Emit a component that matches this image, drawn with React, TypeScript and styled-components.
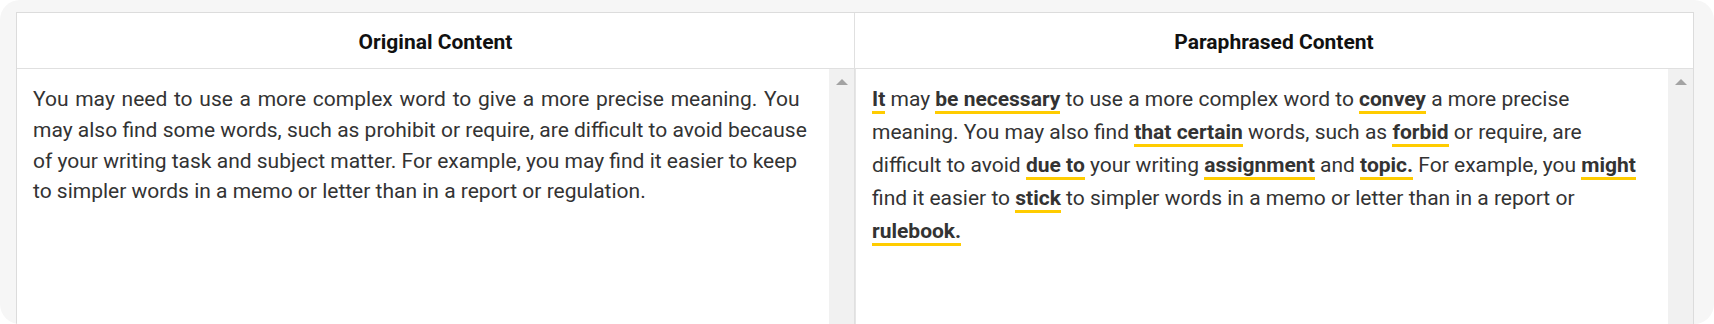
import React from "react";
import styled, { createGlobalStyle } from "styled-components";

const Global = createGlobalStyle`
  html, body { margin: 0; padding: 0; background: #ffffff; }
  body { font-family: Roboto, "Liberation Sans", Arial, sans-serif; }
  * { box-sizing: border-box; }
`;

const Panel = styled.div`
  height: 324px;
  background: #f6f6f6;
  border-radius: 20px;
  overflow: hidden;
  padding: 12px 20px 0 16px;
`;

const Table = styled.div`
  display: grid;
  grid-template-columns: 1fr 1fr;
  grid-template-rows: 56px 280px;
  background: #ffffff;
  border: 1px solid #dcdcdc;
`;

const HeaderCell = styled.div<{ $first?: boolean }>`
  display: flex;
  align-items: center;
  justify-content: center;
  padding-top: 2px;
  border-bottom: 1px solid #e0e0e0;
  border-right: ${(p) => (p.$first ? "1px solid #e0e0e0" : "none")};
  font-size: 21px;
  font-weight: 700;
  color: #111111;
`;

const BodyCell = styled.div<{ $first?: boolean }>`
  display: flex;
  min-width: 0;
  border-right: ${(p) => (p.$first ? "1px solid #e0e0e0" : "none")};
  border-left: ${(p) => (p.$first ? "none" : "1px solid #e6e6e6")};
`;

const Text = styled.div<{ $lh: number; $pt: number; $fs: number }>`
  flex: 1;
  min-width: 0;
  overflow: hidden;
  white-space: nowrap;
  padding: ${(p) => p.$pt}px 0 0 16px;
  font-size: ${(p) => p.$fs}px;
  line-height: ${(p) => p.$lh}px;
  color: #333333;
`;

const Line = styled.span<{ $ws?: number }>`
  word-spacing: ${(p) => p.$ws ?? 0}px;
`;

const Track = styled.div`
  width: 25px;
  flex: none;
  background: #f1f1f1;
  display: flex;
  justify-content: center;
  padding-top: 10px;
`;

const Arrow = styled.div`
  width: 0;
  height: 0;
  border-left: 6px solid transparent;
  border-right: 6px solid transparent;
  border-bottom: 6px solid #a3a3a3;
`;

const Mark = styled.strong`
  font-weight: 700;
  color: #333333;
  border-bottom: 3px solid #ffcc00;
`;

const Scrollbar = () => (
  <Track>
    <Arrow />
  </Track>
);

export default function App() {
  return (
    <>
      <Global />
      <Panel>
        <Table>
          <HeaderCell $first>Original Content</HeaderCell>
          <HeaderCell>Paraphrased Content</HeaderCell>
          <BodyCell $first>
            <Text $fs={21} $lh={30.8} $pt={15}>
              <Line $ws={1.5}>You may need to use a more complex word to give a more precise meaning. You</Line>
              <br />
              may also find some words, such as prohibit or require, are difficult to avoid because
              <br />
              of your writing task and subject matter. For example, you may find it easier to keep
              <br />
              to simpler words in a memo or letter than in a report or regulation.
            </Text>
            <Scrollbar />
          </BodyCell>
          <BodyCell>
            <Text $fs={21} $lh={33} $pt={14}>
              <Mark>It</Mark> may <Mark>be necessary</Mark> to use a more complex word to <Mark>convey</Mark> a more
              precise
              <br />
              meaning. You may also find <Mark>that certain</Mark> words, such as <Mark>forbid</Mark> or require, are
              <br />
              difficult to avoid <Mark>due to</Mark> your writing <Mark>assignment</Mark> and <Mark>topic.</Mark> For
              example, you <Mark>might</Mark>
              <br />
              find it easier to <Mark>stick</Mark> to simpler words in a memo or letter than in a report or
              <br />
              <Mark>rulebook.</Mark>
            </Text>
            <Scrollbar />
          </BodyCell>
        </Table>
      </Panel>
    </>
  );
}
